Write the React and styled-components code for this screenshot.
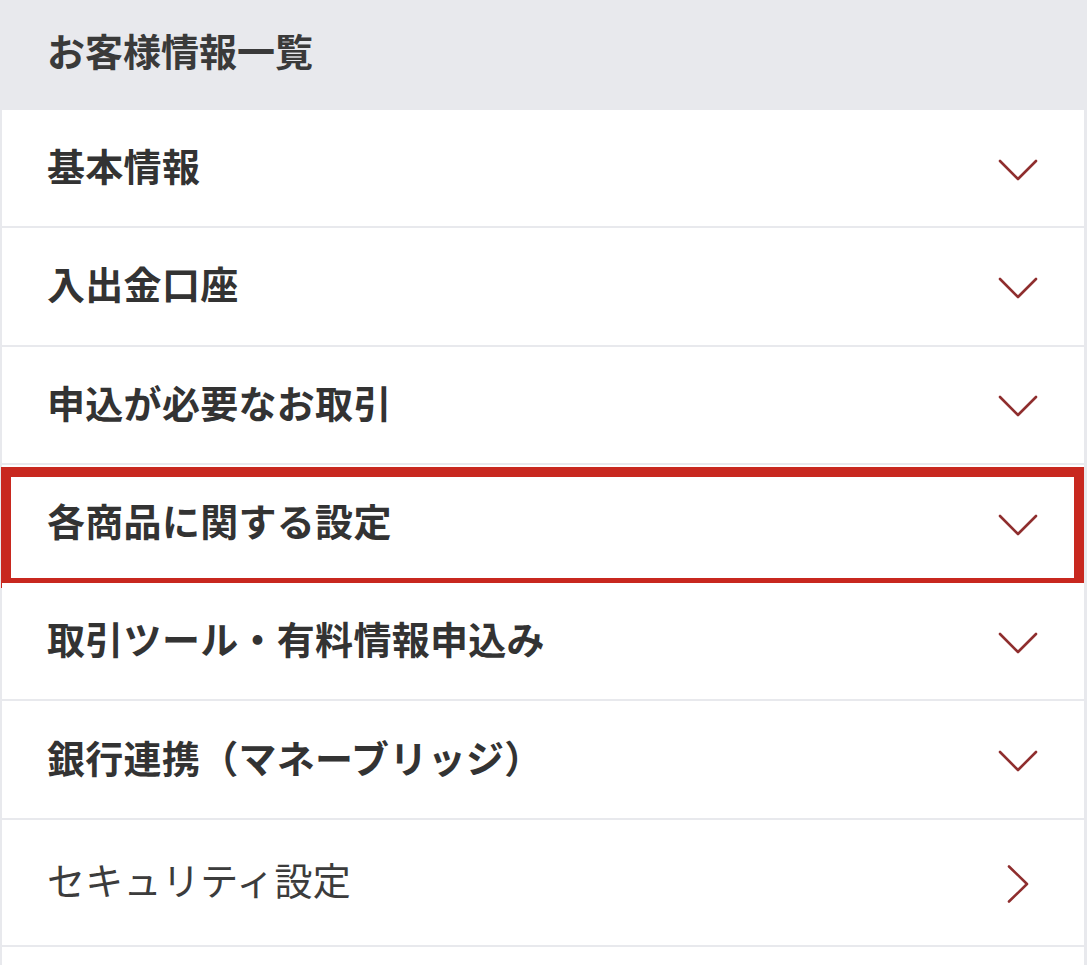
import React from 'react';
import styled, { createGlobalStyle } from 'styled-components';

const GlobalStyle = createGlobalStyle`
  html, body {
    margin: 0;
    padding: 0;
    background: #e8e9ed;
  }
  * {
    box-sizing: border-box;
  }
`;

const menuItems = [
  { label: '基本情報', type: 'down' },
  { label: '入出金口座', type: 'down' },
  { label: '申込が必要なお取引', type: 'down' },
  { label: '各商品に関する設定', type: 'down', highlight: true },
  { label: '取引ツール・有料情報申込み', type: 'down' },
  { label: '銀行連携（マネーブリッジ）', type: 'down' },
  { label: 'セキュリティ設定', type: 'link' },
];

const ChevronDown = () => (
  <svg width="40" height="40" viewBox="0 0 40 40" fill="none">
    <polyline
      points="2,11 20,29 38,11"
      stroke="#8f2e2e"
      strokeWidth="2.6"
      strokeLinecap="round"
      strokeLinejoin="round"
    />
  </svg>
);

const ChevronRight = () => (
  <svg width="40" height="40" viewBox="0 0 40 40" fill="none">
    <polyline
      points="11,2.5 29,20 11,37.5"
      stroke="#8f2e2e"
      strokeWidth="2.6"
      strokeLinecap="round"
      strokeLinejoin="round"
    />
  </svg>
);

const App = () => {
  return (
    <>
      <GlobalStyle />
      <Page>
        <Header>お客様情報一覧</Header>
        <List>
          {menuItems.map((item, index) => (
            <Row key={index} $tall={item.type === 'link'}>
              <Label $light={item.type === 'link'}>{item.label}</Label>
              <IconBox>
                {item.type === 'link' ? <ChevronRight /> : <ChevronDown />}
              </IconBox>
              {item.highlight && <Highlight />}
            </Row>
          ))}
          <Row />
        </List>
      </Page>
    </>
  );
};

const Page = styled.div`
  width: 100%;
  height: 965px;
  overflow: hidden;
  font-family: 'Noto Sans CJK JP', 'Noto Sans', sans-serif;
  color: #333333;
`;

const Header = styled.div`
  height: 108px;
  display: flex;
  align-items: center;
  padding-left: 47px;
  padding-bottom: 10px;
  font-size: 38px;
  font-weight: 700;
  color: #3a3a3a;
  background: #e8e9ed;
`;

const List = styled.div`
  display: flex;
  flex-direction: column;
  gap: 2px;
  padding-top: 2px;
  margin: 0 3px 0 2px;
`;

const Row = styled.div`
  position: relative;
  height: ${({ $tall }) => ($tall ? '125px' : '116.3px')};
  flex-shrink: 0;
  display: flex;
  align-items: center;
  justify-content: space-between;
  padding: 0 46px 0 45px;
  background: #ffffff;
`;

const Label = styled.span`
  font-size: 38px;
  font-weight: ${({ $light }) => ($light ? 400 : 700)};
  color: ${({ $light }) => ($light ? '#3c3c3c' : '#333333')};
  letter-spacing: 0.3px;
  padding-bottom: 7px;
`;

const IconBox = styled.span`
  width: 40px;
  height: 40px;
  display: flex;
  align-items: center;
  justify-content: center;
  margin-top: 3px;
`;

const Highlight = styled.div`
  position: absolute;
  top: 2px;
  bottom: -7px;
  left: -1px;
  right: 0;
  border: 10px solid #c8281f;
  pointer-events: none;
`;

export default App;
